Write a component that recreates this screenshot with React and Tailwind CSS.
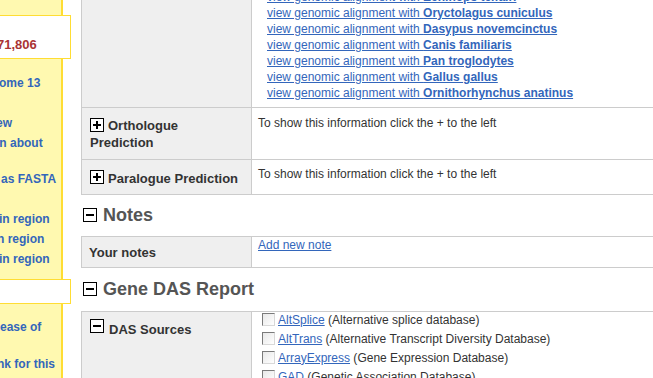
import React from 'react';

const SPECIES = [
  'Monodelphis domestica',
  'Loxodonta africana',
  'Echinops telfairi',
  'Oryctolagus cuniculus',
  'Dasypus novemcinctus',
  'Canis familiaris',
  'Pan troglodytes',
  'Gallus gallus',
  'Ornithorhynchus anatinus',
];

const DAS_SOURCES = [
  { name: 'AltSplice', desc: 'Alternative splice database' },
  { name: 'AltTrans', desc: 'Alternative Transcript Diversity Database' },
  { name: 'ArrayExpress', desc: 'Gene Expression Database' },
  { name: 'GAD', desc: 'Genetic Association Database' },
];

function ToggleIcon({ plus = false }) {
  return (
    <svg width="14" height="14" viewBox="0 0 14 14" className="shrink-0">
      <rect x="0.5" y="0.5" width="13" height="13" fill="white" stroke="black" />
      <path d="M3 7h8" stroke="black" strokeWidth="2" />
      {plus && <path d="M7 3v8" stroke="black" strokeWidth="2" />}
    </svg>
  );
}

function Heading({ children, className }) {
  return (
    <div className={`flex items-center h-[24px] pl-[2px] gap-[6px] ${className}`}>
      <ToggleIcon />
      <span className="text-[18px] font-bold text-[#555]">{children}</span>
    </div>
  );
}

function Checkbox() {
  return (
    <span className="w-[13px] h-[13px] shrink-0 border border-t-[#7a7a7a] border-l-[#7a7a7a] border-r-[#d8d8d8] border-b-[#d8d8d8] bg-gradient-to-br from-[#e8e8e8] to-white" />
  );
}

function Sidebar() {
  return (
    <aside className="relative w-[63px] shrink-0 bg-[#fff9b0] border-r-2 border-[#ffdd33] text-[12px] font-bold leading-[20px] text-[#3366bb] whitespace-nowrap">
      {/* stats box */}
      <div className="relative z-10 mt-[15px] -ml-[9px] w-[80px] h-[44px] border border-[#ffdd33] bg-white pt-[21px] pl-[5px]">
        <div className="text-[13px] leading-[16px] text-[#aa3333]">71,806</div>
      </div>

      <div className="mt-[14px] -ml-[1px]">ome 13</div>
      <div className="mt-[20px] -ml-[4px]">ew</div>
      <div className="-ml-[8px]">on about</div>
      <div className="mt-[16px] ml-[1px]">as FASTA</div>
      <div className="mt-[20px] -ml-[1px]">in region</div>
      <div className="-ml-[3px]">n region</div>
      <div className="-ml-[1px]">in region</div>

      {/* search box */}
      <div className="relative z-10 mt-[10px] -ml-[9px] w-[80px] h-[25px] border border-[#ffdd33] bg-white" />

      <div className="mt-[13px]">ease of</div>
      <div className="mt-[17px] -ml-[3px]">nk for this</div>
    </aside>
  );
}

export default function App() {
  return (
    <div className="flex w-[653px] h-[378px] overflow-hidden bg-white font-['Liberation_Sans',Arial,sans-serif]">
      <Sidebar />

      <main className="flex-1 min-w-0 -mt-[50px] pl-[18px]">
        {/* Comparative genomics table */}
        <div className="w-[620px] border-t border-x border-[#cccccc]">
          <div className="flex border-b border-[#cccccc]">
            <div className="w-[170px] shrink-0 bg-[#efefef] border-r border-[#cccccc]" />
            <div className="flex-1 pl-[15px] py-[6px] text-[12px] leading-[16px]">
              {SPECIES.map((s) => (
                <div key={s}>
                  <a href="#" className="text-[#3366bb] underline">
                    view genomic alignment with <b>{s}</b>
                  </a>
                </div>
              ))}
            </div>
          </div>

          <div className="flex border-b border-[#cccccc]">
            <div className="w-[170px] h-[51px] shrink-0 bg-[#efefef] border-r border-[#cccccc] flex items-center px-[8px] text-[13px] font-bold leading-[17px] text-[#333]">
              <div>
                <span className="inline-block align-[-2px] mr-[4px]">
                  <ToggleIcon plus />
                </span>
                Orthologue
                <br />
                Prediction
              </div>
            </div>
            <div className="flex-1 pl-[6px] pt-[7px] text-[12px] leading-[16px] text-[#333]">
              To show this information click the + to the left
            </div>
          </div>

          <div className="flex border-b border-[#cccccc]">
            <div className="w-[170px] h-[34px] shrink-0 bg-[#efefef] border-r border-[#cccccc] flex items-center gap-[4px] px-[8px] text-[13px] font-bold leading-[17px] text-[#333] whitespace-nowrap">
              <ToggleIcon plus />
              <span className="mt-[2px]">Paralogue Prediction</span>
            </div>
            <div className="flex-1 pl-[6px] pt-[6px] text-[12px] leading-[16px] text-[#333]">
              To show this information click the + to the left
            </div>
          </div>
        </div>

        {/* Notes */}
        <Heading className="mt-[8px] mb-[9px]">Notes</Heading>
        <div className="w-[620px] border border-[#cccccc]">
          <div className="flex">
            <div className="w-[170px] h-[30px] shrink-0 bg-[#efefef] border-r border-[#cccccc] flex items-center px-[7px] text-[13px] font-bold leading-[17px] text-[#333]">
              Your notes
            </div>
            <div className="flex-1 pl-[6px] text-[12px] leading-[16px]">
              <a href="#" className="text-[#3366bb] underline">Add new note</a>
            </div>
          </div>
        </div>

        {/* Gene DAS Report */}
        <Heading className="mt-[9px] mb-[10px]">Gene DAS Report</Heading>
        <div className="w-[620px] border-t border-x border-[#cccccc]">
          <div className="flex">
            <div className="w-[170px] h-[120px] shrink-0 bg-[#efefef] border-r border-[#cccccc] flex items-start gap-[5px] pt-[7px] px-[8px] text-[13px] font-bold leading-[17px] text-[#333]">
              <ToggleIcon />
              <span className="mt-[2px]">DAS Sources</span>
            </div>
            <div className="flex-1 -mt-[2px] pl-[10px] text-[12px] leading-[16px] text-[#333]">
              {DAS_SOURCES.map((d) => (
                <div key={d.name} className="flex items-center h-[19px] gap-[3px] whitespace-nowrap">
                  <Checkbox />
                  <span>
                    <a href="#" className="text-[#3366bb] underline">{d.name}</a> ({d.desc})
                  </span>
                </div>
              ))}
            </div>
          </div>
        </div>
      </main>
    </div>
  );
}
